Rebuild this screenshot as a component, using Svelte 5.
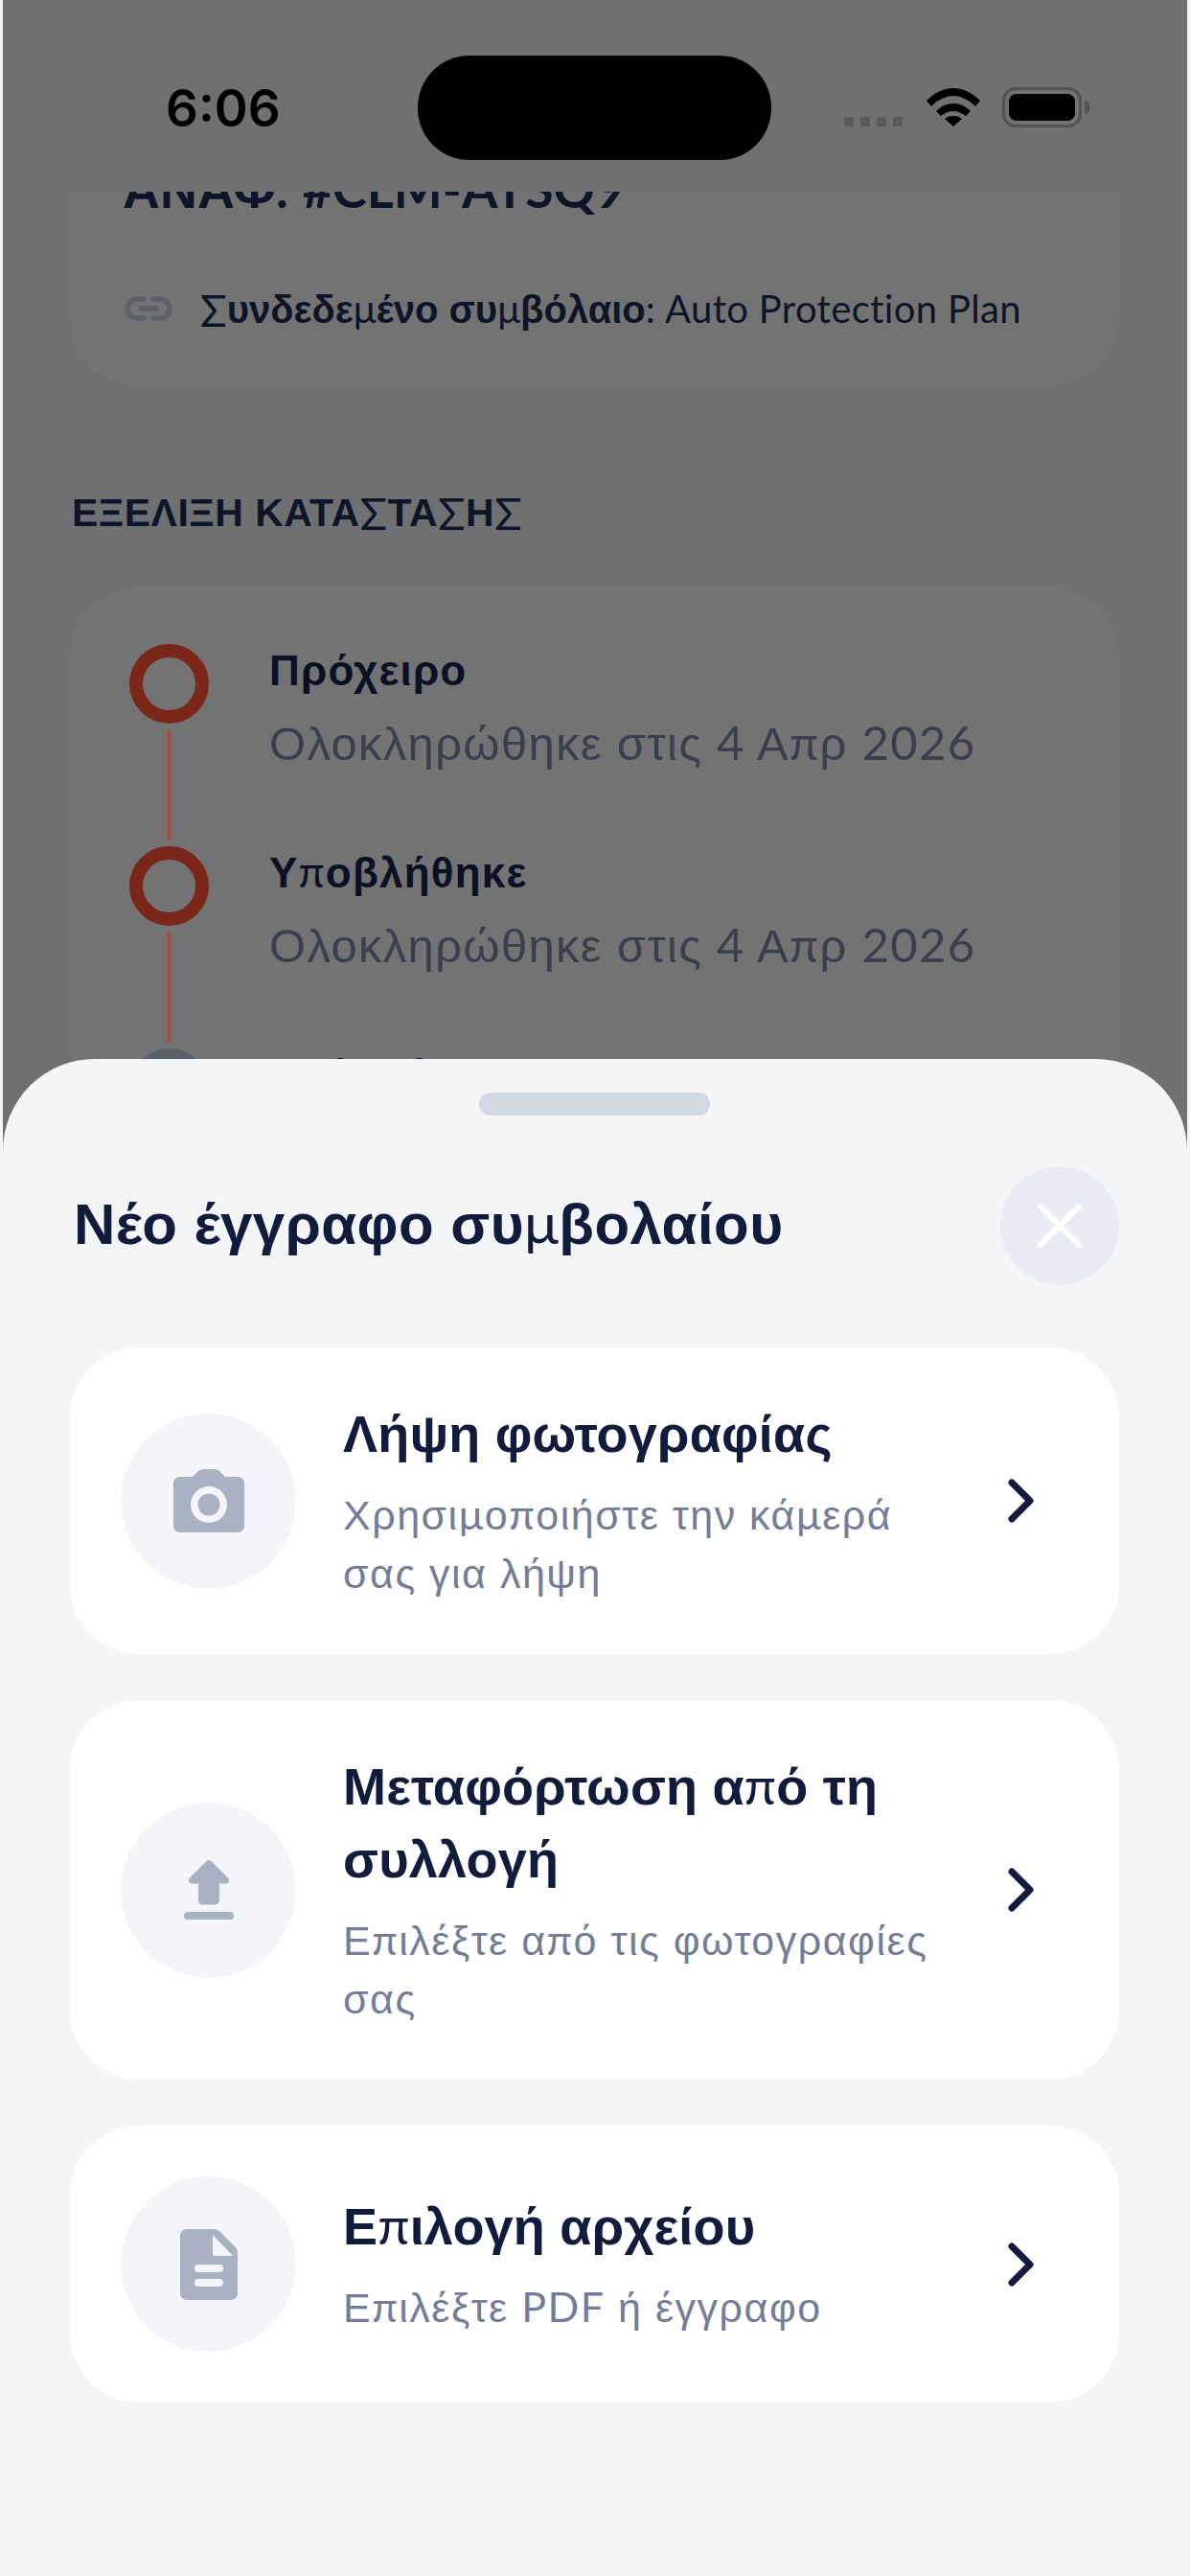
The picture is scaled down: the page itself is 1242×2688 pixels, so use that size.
<script>
  const sheetOptions = [
    { icon: 'camera', title: 'Λήψη φωτογραφίας', sub: 'Χρησιμοποιήστε την κάμερά σας για λήψη' },
    { icon: 'upload', title: 'Μεταφόρτωση από τη συλλογή', sub: 'Επιλέξτε από τις φωτογραφίες σας' },
    { icon: 'file', title: 'Επιλογή αρχείου', sub: 'Επιλέξτε PDF ή έγγραφο' }
  ];
  const steps = [
    { title: 'Πρόχειρο', sub: 'Ολοκληρώθηκε στις 4 Απρ 2026', done: true },
    { title: 'Υποβλήθηκε', sub: 'Ολοκληρώθηκε στις 4 Απρ 2026', done: true },
    { title: 'Υπό εξέταση', sub: '', done: false }
  ];

  // Greek set in the Helvetica-like face; π μ Σ and Latin stay in the primary face.
  function runs(text) {
    const out = [];
    for (const ch of text) {
      let kind = 'lat';
      if (ch === 'π' || ch === 'μ') kind = 'thin';
      else if (ch === 'Σ') kind = 'sig';
      else if (/[\u0370-\u03FF\u1F00-\u1FFF\s]/.test(ch)) kind = 'gr';
      const last = out[out.length - 1];
      if (last && last.kind === kind) last.t += ch;
      else out.push({ kind, t: ch });
    }
    return out;
  }
</script>

{#snippet mixed(text)}{#each runs(text) as r}<span class={r.kind}>{r.t}</span>{/each}{/snippet}

<div class="screen">
  <div class="back">
    <div class="summary">
      <div class="ref">{@render mixed('ΑΝΑΦ. #CLM-ATSQ9')}</div>
      <div class="linked">
        <svg class="link" viewBox="0 0 50 26" aria-hidden="true">
          <path d="M20 3H13a10 10 0 0 0 0 20h7M30 3h7a10 10 0 0 1 0 20h-7M17 13h16" fill="none" stroke="#5b6069" stroke-width="5.5" stroke-linecap="round"/>
        </svg>
        <span><b>{@render mixed('Συνδεδεμένο συμβόλαιο')}</b>: <span class="plan">Auto Protection Plan</span></span>
      </div>
    </div>
    <h2 class="section">{@render mixed('ΕΞΕΛΙΞΗ ΚΑΤΑΣΤΑΣΗΣ')}</h2>
    <div class="timeline">
      {#each steps as s, i}
        <div class="step">
          <div class="rail">
            <div class="dot" class:done={s.done}></div>
            {#if i < 2}<div class="line"></div>{/if}
          </div>
          <div class="stext">
            <div class="stitle">{@render mixed(s.title)}</div>
            {#if s.sub}<div class="ssub">{@render mixed(s.sub)}</div>{/if}
          </div>
        </div>
      {/each}
    </div>
  </div>

  <header class="status">
    <span class="time">6:06</span>
    <div class="island"></div>
    <div class="indicators">
      <div class="signal"><i></i><i></i><i></i><i></i></div>
      <svg class="wifi" viewBox="0 0 56 40" aria-hidden="true">
        <path d="M0 13C8 5 18 0 28 0s20 5 28 13l-5 6C44 12 36 8 28 8S12 12 5 19Z" fill="#000"/>
        <path d="M10 24c5-5 11-8 18-8s13 3 18 8l-5 5c-4-3-8-5-13-5s-9 2-13 5Z" fill="#000"/>
        <path d="M19 32c2-2 5-3 9-3s7 1 9 3l-9 8Z" fill="#000"/>
      </svg>
      <div class="battery"><div class="cell"></div></div>
      <div class="tip"></div>
    </div>
  </header>

  <section class="sheet">
    <div class="handle"></div>
    <div class="sheet-head">
      <h1>{@render mixed('Νέο έγγραφο συμβολαίου')}</h1>
      <button class="close" aria-label="Κλείσιμο">
        <svg viewBox="0 0 46 46" aria-hidden="true">
          <path d="M3 3l40 40M43 3L3 43" stroke="#fff" stroke-width="6" stroke-linecap="round" fill="none"/>
        </svg>
      </button>
    </div>
    <div class="options">
      {#each sheetOptions as o}
        <div class="option">
          <div class="circle">
            {#if o.icon === 'camera'}
              <svg class="ic-camera" viewBox="0 0 74 66" aria-hidden="true">
                <path fill-rule="evenodd" fill="#a9b2c3" d="M7 8h13l4-4c2-3 5-4 8-4h10c3 0 6 1 8 4l4 4h13c4 0 7 3 7 7v44c0 4-3 7-7 7H7c-4 0-7-3-7-7V15c0-4 3-7 7-7Zm30 10a19 19 0 1 0 0 38 19 19 0 0 0 0-38Z"/>
                <circle cx="37" cy="37" r="11.5" fill="#a9b2c3"/>
              </svg>
            {:else if o.icon === 'upload'}
              <svg class="ic-upload" viewBox="0 0 52 62" aria-hidden="true">
                <path fill="#a9b2c3" d="M26 0c1 0 2 .5 3 1.500l17 17c2 2 1 6-2 6H37v17c0 3-2 5-5 5H20c-3 0-5-2-5-5V24.500H8c-3 0-4-4-2-6l17-17C24 .5 25 0 26 0Z"/>
                <rect y="54" width="52" height="8" rx="4" fill="#a9b2c3"/>
              </svg>
            {:else}
              <svg class="ic-file" viewBox="0 0 60 74" aria-hidden="true">
                <path fill-rule="evenodd" fill="#a9b2c3" d="M7 0h29c2 0 3 .8 5 2l17 17c1 1.500 2 3 2 5v43c0 4-3 7-7 7H7c-4 0-7-3-7-7V7c0-4 3-7 7-7Zm27 6v19c0 2 1 3 3 3h18Z"/>
                <rect x="15" y="37" width="30" height="8" rx="4" fill="#f3f5f9"/>
                <rect x="15" y="52" width="30" height="8" rx="4" fill="#f3f5f9"/>
              </svg>
            {/if}
          </div>
          <div class="otext">
            <div class="otitle">{@render mixed(o.title)}</div>
            <div class="osub">{@render mixed(o.sub)}</div>
          </div>
          <svg class="chev" viewBox="0 0 28 46" aria-hidden="true">
            <path d="M4 4l19 19L4 42" fill="none" stroke="#111c3d" stroke-width="7" stroke-linecap="round" stroke-linejoin="round"/>
          </svg>
        </div>
      {/each}
    </div>
  </section>
</div>

<style>
  :global(body) {
    margin: 0;
    background: #6f7072;
  }
  .screen {
    position: relative;
    width: 1242px;
    height: 2688px;
    overflow: hidden;
    background: #6f7072;
    border-left: 3px solid #f4f5f7;
    border-right: 3px solid #f4f5f7;
    box-sizing: border-box;
    font-family: Lato, "Liberation Sans", sans-serif;
  }
  .gr {
    font-family: "Liberation Sans", sans-serif;
    line-height: 0;
  }
  .lat {
    line-height: 0;
  }
  .thin {
    font-weight: 400;
    line-height: 0;
  }
  .sig {
    font-weight: 400;
    font-size: 1.14em;
    line-height: 0;
    vertical-align: -0.08em;
  }
  .back {
    padding: 200px 71px 0 70px;
  }
  .summary {
    background: #737373;
    height: 203px;
    border-radius: 0 0 72px 72px;
    padding: 0 55px;
    overflow: hidden;
    box-sizing: border-box;
  }
  .ref {
    font-weight: 700;
    font-size: 54px;
    line-height: 54px;
    margin-top: -30px;
    color: #0e1528;
    white-space: nowrap;
  }
  .linked {
    display: flex;
    align-items: center;
    gap: 29px;
    margin-top: 71px;
    font-size: 40px;
    line-height: 54px;
    color: #0e1528;
    white-space: nowrap;
  }
  .plan {
    letter-spacing: 0.35px;
  }
  .link {
    width: 50px;
    height: 26px;
    margin-left: 2px;
  }
  .section {
    margin: 104px 0 0 2px;
    font-size: 41px;
    line-height: 54px;
    font-weight: 700;
    letter-spacing: 0.5px;
    color: #0e1528;
  }
  .timeline {
    margin-top: 52px;
    background: #737373;
    border-radius: 72px;
    padding: 59px 62px;
    height: 800px;
    box-sizing: border-box;
  }
  .step {
    display: flex;
    gap: 63px;
    height: 211px;
  }
  .rail {
    width: 83px;
    display: flex;
    flex-direction: column;
    align-items: center;
    gap: 6px;
  }
  .dot {
    width: 83px;
    height: 83px;
    box-sizing: border-box;
    border-radius: 50%;
    background: #5a6069;
    flex: none;
  }
  .dot.done {
    background: none;
    border: 14px solid #7a2618;
  }
  .line {
    width: 5px;
    height: 116px;
    background: #92564e;
    border-radius: 3px;
  }
  .stitle {
    font-size: 44px;
    line-height: 60px;
    font-weight: 700;
    color: #0b1024;
    letter-spacing: 1.2px;
    margin-top: -4px;
  }
  .ssub {
    font-size: 49px;
    line-height: 70px;
    letter-spacing: 1.3px;
    color: #3a3f4e;
    margin-top: 11px;
    white-space: nowrap;
  }
  .status {
    position: absolute;
    inset: 0 0 auto 0;
    height: 200px;
    background: #6f7072;
  }
  .time {
    position: absolute;
    left: 170px;
    top: 82px;
    font-family: Inter, "Liberation Sans", sans-serif;
    font-size: 53px;
    line-height: 62px;
    font-weight: 600;
    color: #000;
  }
  .island {
    position: absolute;
    left: 433px;
    top: 58px;
    width: 369px;
    height: 109px;
    border-radius: 54px;
    background: #000;
  }
  .indicators {
    position: absolute;
    inset: 0;
  }
  .signal {
    position: absolute;
    left: 878px;
    top: 122px;
    display: flex;
    gap: 7px;
  }
  .signal i {
    width: 10px;
    height: 10px;
    border-radius: 3px;
    background: #59595b;
  }
  .wifi {
    position: absolute;
    left: 964px;
    top: 92px;
    width: 56px;
    height: 40px;
  }
  .battery {
    position: absolute;
    left: 1043px;
    top: 91px;
    width: 83px;
    height: 42px;
    box-sizing: border-box;
    border: 3px solid #525254;
    border-radius: 14px;
    padding: 4px;
  }
  .cell {
    width: 100%;
    height: 100%;
    background: #000;
    border-radius: 8px;
  }
  .tip {
    position: absolute;
    left: 1129px;
    top: 105px;
    width: 5px;
    height: 14px;
    background: #525254;
    border-radius: 0 6px 6px 0;
  }
  .sheet {
    position: absolute;
    left: 0;
    right: 0;
    top: 1105px;
    bottom: 0;
    background: #f4f5f7;
    border-radius: 96px 96px 0 0;
    padding: 35px 71px 0 70px;
    box-sizing: border-box;
  }
  .handle {
    width: 241px;
    height: 24px;
    border-radius: 12px;
    background: #d2d8e2;
    margin: 0 auto;
  }
  .sheet-head {
    display: flex;
    justify-content: space-between;
    align-items: center;
    margin-top: 53px;
    padding-left: 4px;
  }
  h1 {
    margin: 0;
    padding-bottom: 9px;
    font-size: 60px;
    font-weight: 700;
    line-height: 80px;
    color: #111c3d;
    letter-spacing: 0.45px;
  }
  .close {
    width: 124px;
    height: 124px;
    border: 0;
    padding: 0;
    border-radius: 50%;
    background: #e8ecf2;
    display: flex;
    align-items: center;
    justify-content: center;
  }
  .close svg {
    width: 46px;
    height: 46px;
  }
  .options {
    display: flex;
    flex-direction: column;
    gap: 48px;
    margin-top: 65px;
  }
  .option {
    display: flex;
    align-items: center;
    background: #fff;
    border-radius: 72px;
    padding: 53px 88px 53px 53px;
  }
  .circle {
    width: 183px;
    height: 183px;
    flex: none;
    border-radius: 50%;
    background: #f3f5f9;
    display: flex;
    align-items: center;
    justify-content: center;
  }
  .ic-camera {
    width: 74px;
    height: 66px;
  }
  .ic-upload {
    width: 52px;
    height: 62px;
  }
  .ic-file {
    width: 60px;
    height: 74px;
  }
  .otext {
    flex: 1;
    min-width: 0;
    margin-left: 49px;
    margin-right: 64px;
  }
  .otitle {
    font-size: 54px;
    line-height: 76px;
    margin-top: -2px;
    font-weight: 700;
    color: #111c3d;
    letter-spacing: 0.2px;
  }
  .osub {
    font-size: 43px;
    line-height: 61px;
    color: #737d98;
    margin-top: 16px;
    margin-bottom: 2px;
    letter-spacing: 1.5px;
  }
  .chev {
    width: 28px;
    height: 46px;
    flex: none;
  }
</style>
